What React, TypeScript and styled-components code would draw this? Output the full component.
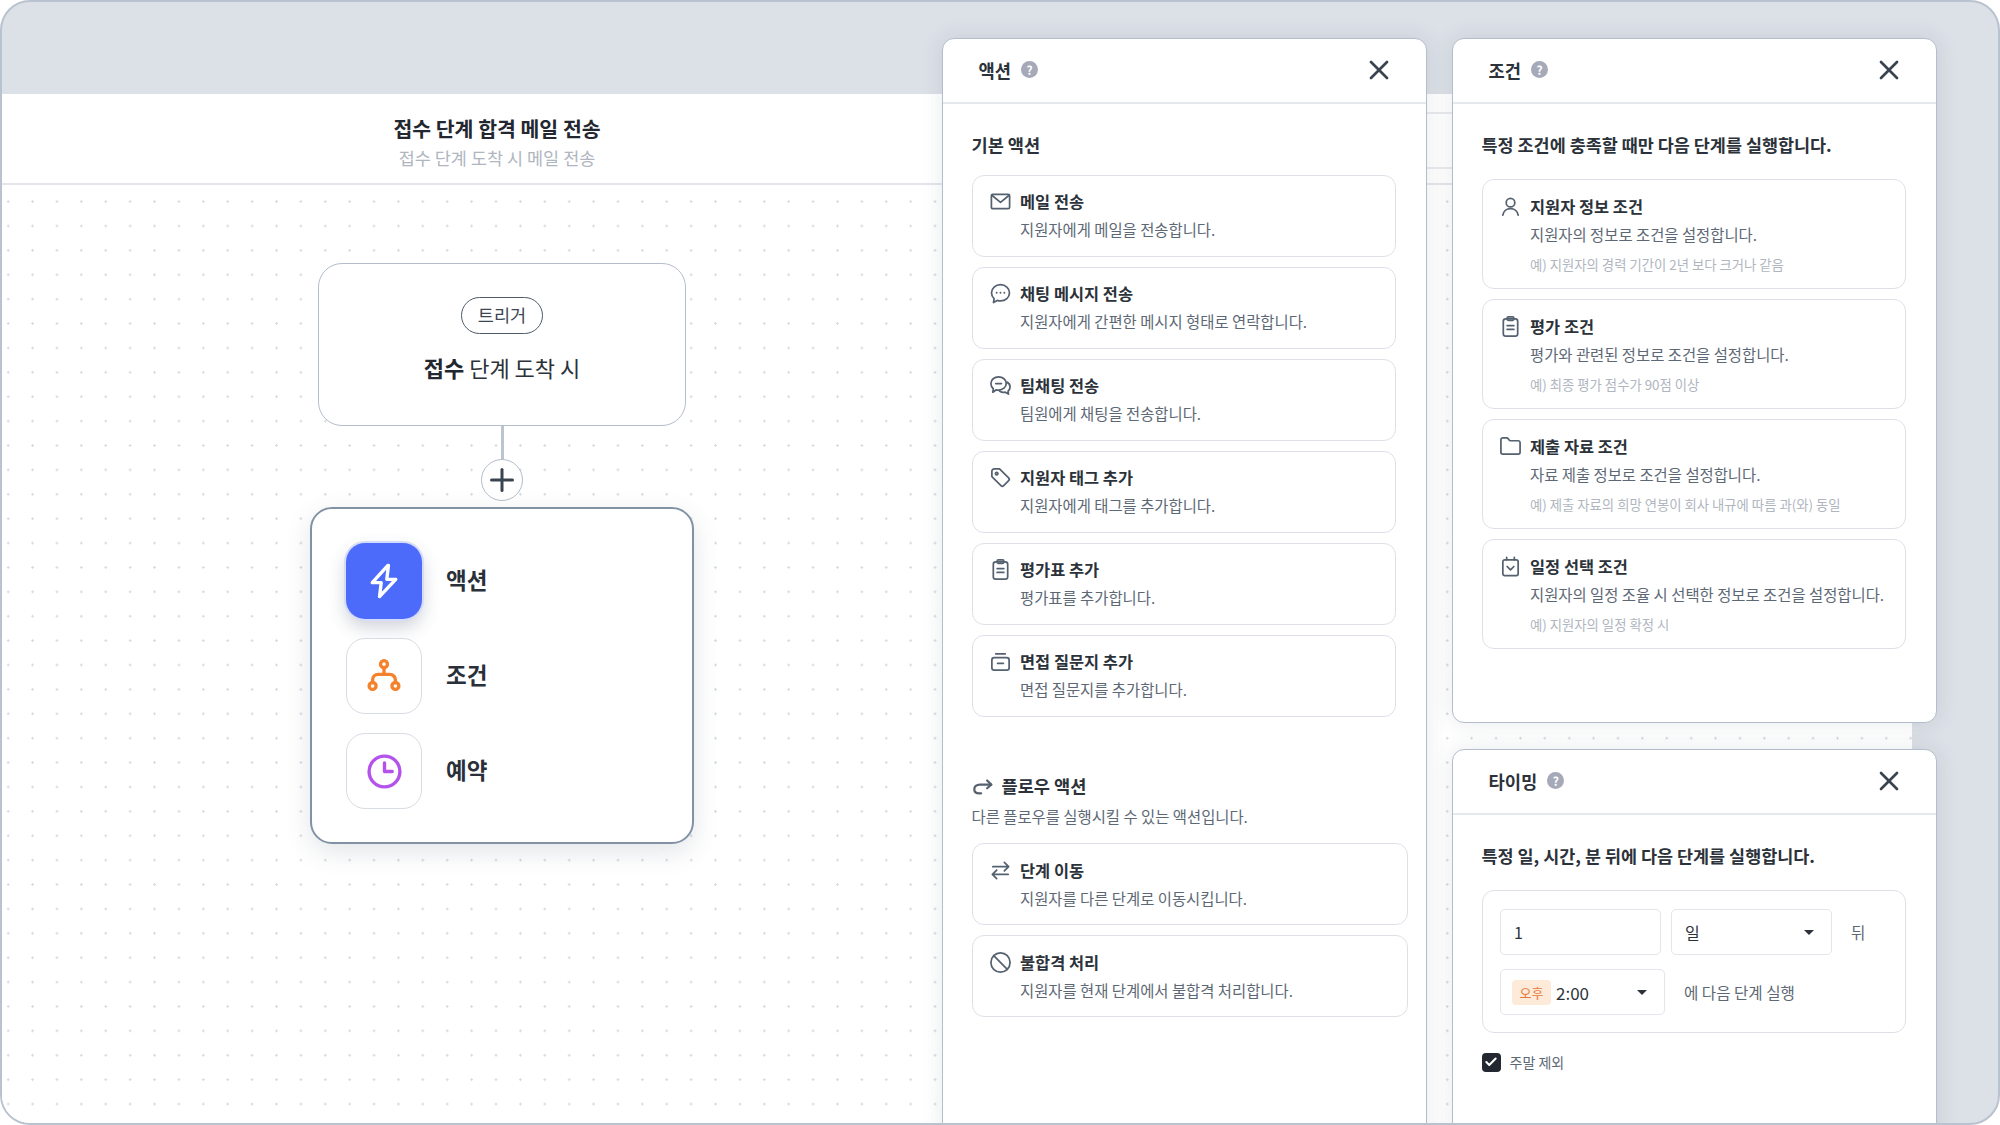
import * as React from 'react';
import styled, { createGlobalStyle } from 'styled-components';
import { Ban, Check, Folder, Plus, X } from 'lucide-react';

const GlobalStyle = createGlobalStyle`
  html, body {
    margin: 0;
    padding: 0;
    background: #fff;
  }
  body {
    font-family: "Noto Sans CJK KR", "Noto Sans", sans-serif;
    color: #23272f;
  }
  * {
    box-sizing: border-box;
  }
`;

const Frame = styled.div`
  display: grid;
  grid-template-columns: minmax(0, 1fr);
  grid-template-rows: minmax(0, 1fr);
  width: 2000px;
  height: 1125px;
  border: 2px solid #b9c2cf;
  border-radius: 30px;
  background: #dce0e7;
  overflow: hidden;
`;

const Workspace = styled.main`
  grid-area: 1 / 1;
  display: flex;
  flex-direction: column;
  margin: 92px 86px 0 0;
  background: #fff;
`;

const WorkspaceHeader = styled.header`
  display: flex;
  flex: none;
  height: 91px;
  border-bottom: 2px solid #e3e7ec;
`;

const TitleBlock = styled.div`
  flex: none;
  width: 990px;
  padding-top: 19px;
  text-align: center;
`;

const FlowTitle = styled.h1`
  margin: 0;
  font-size: 20.5px;
  line-height: 30px;
  font-weight: 700;
  color: #23272f;
`;

const FlowSubtitle = styled.p`
  margin: 0;
  font-size: 17.5px;
  line-height: 30px;
  font-weight: 400;
  color: #b0b6c0;
`;

const HiddenTabs = styled.div`
  flex: 1;
  height: 57px;
  margin-top: 18px;
  border-top: 2px solid #e8ebef;
  border-bottom: 2px solid #e8ebef;
`;

const Canvas = styled.section`
  flex: 1;
  padding: 78px 0 0 308px;
  background-color: #fff;
  background-image: radial-gradient(circle, #d6dbe2 1.1px, transparent 1.4px);
  background-size: 24.4px 24.4px;
  background-position: -6px 4.4px;
`;

const NodeColumn = styled.div`
  display: flex;
  flex-direction: column;
  align-items: center;
  width: 384px;
`;

const TriggerNode = styled.div`
  display: flex;
  flex: none;
  flex-direction: column;
  align-items: center;
  width: 368px;
  height: 163px;
  padding-top: 33px;
  border: 1px solid #b4bdcb;
  border-radius: 24px;
  background: #fff;
`;

const TriggerPill = styled.span`
  display: flex;
  align-items: center;
  justify-content: center;
  width: 82px;
  height: 37px;
  border: 1px solid #4f5b69;
  border-radius: 19px;
  font-size: 17.5px;
  padding-bottom: 2px;
  font-weight: 400;
  color: #3d4753;
`;

const TriggerLabel = styled.p`
  margin: 17px 0 0;
  font-size: 22px;
  line-height: 32px;
  font-weight: 400;
  color: #2c323a;
  strong {
    font-weight: 700;
    color: #23272f;
  }
`;

const Connector = styled.div`
  flex: none;
  width: 3px;
  height: 33px;
  background: #bcc4d0;
`;

const AddButton = styled.button`
  display: flex;
  flex: none;
  align-items: center;
  justify-content: center;
  width: 42px;
  height: 42px;
  padding: 0;
  border: 1px solid #b4bdcb;
  border-radius: 50%;
  background: #fff;
  color: #3a4450;
`;

const StepMenu = styled.div`
  display: flex;
  flex: none;
  flex-direction: column;
  gap: 19px;
  width: 384px;
  height: 337px;
  margin-top: 6px;
  padding: 34px 0 0 34px;
  border: 2px solid #8292a5;
  border-radius: 22px;
  background: #fff;
  box-shadow: 0 8px 26px rgba(60, 72, 92, 0.14);
`;

const StepRow = styled.div`
  display: flex;
  align-items: center;
  gap: 24px;
`;

const StepTile = styled.div<{ $active?: boolean }>`
  display: flex;
  flex: none;
  align-items: center;
  justify-content: center;
  width: 76px;
  height: 76px;
  border-radius: 19px;
  border: ${p => (p.$active ? '0' : '1px solid #d8dce4')};
  background: ${p => (p.$active ? '#4d6bfa' : '#fff')};
  box-shadow: ${p =>
    p.$active
      ? '0 0 0 2px #d5dcfb, 0 8px 18px rgba(50, 60, 90, 0.24)'
      : 'none'};
`;

const StepLabel = styled.span`
  padding-bottom: 5px;
  font-size: 22.5px;
  line-height: 30px;
  font-weight: 700;
  color: #2a3039;
`;

const PanelDock = styled.div`
  grid-area: 1 / 1;
  display: flex;
  justify-content: flex-end;
  gap: 25px;
  padding: 36px 61.5px 0 0;
  min-height: 0;
`;

const PanelColumn = styled.div`
  display: flex;
  flex: none;
  flex-direction: column;
  gap: 26px;
  width: 485px;
`;

const Panel = styled.aside<{ $height: number }>`
  flex: none;
  width: 485px;
  height: ${p => p.$height}px;
  border: 1px solid #b4bdcb;
  border-radius: 12px;
  background: #fff;
  box-shadow: 0 0 22px rgba(60, 72, 92, 0.12);
`;

const PanelHeader = styled.div`
  display: flex;
  align-items: center;
  height: 65px;
  padding: 0 31px 2px 36px;
  border-bottom: 2px solid #e5e8ed;
`;

const PanelTitle = styled.h2`
  margin: 0;
  font-size: 17.7px;
  line-height: 24px;
  font-weight: 700;
  color: #2c323a;
`;

const HelpBadge = styled.span`
  display: flex;
  align-items: center;
  justify-content: center;
  width: 17px;
  height: 17px;
  margin-left: 10px;
  border-radius: 50%;
  background: #a5a9b8;
  color: #fff;
  font-size: 12px;
  line-height: 17px;
  font-weight: 700;
`;

const CloseIcon = styled(X)`
  margin-left: auto;
  color: #3a4450;
`;

const PanelBody = styled.div`
  padding: 29px 29px 0;
`;

const SectionTitle = styled.h3`
  display: flex;
  align-items: center;
  gap: 8px;
  margin: 0;
  font-size: 17.6px;
  line-height: 24px;
  font-weight: 700;
  color: #2c323a;
`;

const FlowSection = styled.div`
  margin-top: 57px;
`;

const SectionDescription = styled.p`
  margin: 7px 0 16px;
  font-size: 15.4px;
  line-height: 22px;
  color: #5d6875;
`;

const Intro = styled.p`
  margin: 0 0 22px;
  font-size: 17.45px;
  line-height: 24px;
  font-weight: 700;
  color: #2c323a;
`;

const CardList = styled.div<{ $wide?: boolean }>`
  display: flex;
  flex-direction: column;
  gap: 10px;
  width: ${p => (p.$wide ? '436px' : '424px')};
  margin-top: ${p => (p.$wide ? '0' : '18px')};
`;

const ConditionList = styled(CardList)`
  margin-top: 0;
`;

const OptionCard = styled.div<{ $padding: string }>`
  display: flex;
  gap: 8px;
  padding: ${p => p.$padding};
  border: 1px solid #dde1e7;
  border-radius: 12px;
  background: #fff;
`;

const CardIcon = styled.div`
  display: flex;
  flex: none;
  align-items: center;
  justify-content: center;
  width: 24px;
  height: 24px;
  color: #55616f;
`;

const CardText = styled.div`
  min-width: 0;
`;

const CardTitle = styled.div`
  font-size: 16.4px;
  line-height: 24px;
  font-weight: 700;
  color: #2c323a;
`;

const CardDescription = styled.div`
  margin-top: 4px;
  font-size: 15.4px;
  line-height: 24px;
  color: #5d6875;
  white-space: nowrap;
`;

const CardExample = styled.div`
  margin-top: 9px;
  font-size: 13.35px;
  line-height: 20px;
  color: #b0b6c0;
  white-space: nowrap;
`;

const TimingBox = styled.div`
  display: flex;
  flex-direction: column;
  gap: 14px;
  width: 424px;
  height: 143px;
  padding: 18px 17.5px;
  border: 1px solid #dde1e7;
  border-radius: 12px;
`;

const TimingRow = styled.div`
  display: flex;
  align-items: center;
  gap: 10px;
`;

const Field = styled.div<{ $width: number }>`
  display: flex;
  flex: none;
  align-items: center;
  width: ${p => p.$width}px;
  height: 46px;
  padding: 0 17px 0 13px;
  border: 1px solid #e3e6eb;
  border-radius: 5px;
  font-size: 16px;
  color: #2c323a;
`;

const TimeField = styled(Field)`
  padding-left: 11px;
  font-size: 17px;
`;

const Caret = styled.span`
  flex: none;
  width: 0;
  height: 0;
  margin-left: auto;
  border-left: 5px solid transparent;
  border-right: 5px solid transparent;
  border-top: 5.5px solid #2c323a;
`;

const PeriodBadge = styled.span`
  display: flex;
  flex: none;
  align-items: center;
  justify-content: center;
  width: 39px;
  height: 25px;
  margin-right: 5px;
  border-radius: 4px;
  background: #fdead9;
  color: #e5793a;
  font-size: 13px;
`;

const TimingNote = styled.span`
  margin-left: 9px;
  font-size: 15.6px;
  line-height: 22px;
  color: #5d6875;
`;

const WeekendRow = styled.label`
  display: flex;
  align-items: center;
  gap: 9px;
  margin-top: 19px;
  font-size: 14px;
  line-height: 20px;
  color: #5d6875;
`;

const CheckMark = styled.span`
  display: flex;
  align-items: center;
  justify-content: center;
  width: 19px;
  height: 19px;
  border-radius: 4px;
  background: #23272f;
  color: #fff;
`;

type GlyphProps = { size?: number };

const Glyph: React.FC<React.PropsWithChildren<GlyphProps>> = ({ size = 23, children }) => (
  <svg
    width={size}
    height={size}
    viewBox="0 0 24 24"
    fill="none"
    stroke="currentColor"
    strokeWidth={1.8}
    strokeLinecap="round"
    strokeLinejoin="round"
  >
    {children}
  </svg>
);

const MailIcon = () => (
  <Glyph>
    <rect x="2.5" y="4.5" width="19" height="15" rx="1.5" />
    <path d="M3 5.5l9 7.5 9-7.5" />
  </Glyph>
);

const ChatIcon = () => (
  <Glyph>
    <path d="M12 2.800c5.200 0 9.400 3.700 9.400 8.500s-4.200 8.500-9.400 8.500c-1.200 0-2.300-.2-3.400-.6l-3.900 2.200.6-4.100c-1.700-1.500-2.700-3.600-2.700-6 0-4.800 4.200-8.500 9.400-8.500z" />
    <path d="M8 11.300h.01M12 11.300h.01M16 11.300h.01" strokeWidth={2} />
  </Glyph>
);

const TeamChatIcon = () => (
  <Glyph>
    <path d="M10 3c4.400 0 8 3 8 6.900s-3.600 6.900-8 6.900c-.8 0-1.600-.1-2.400-.3L4 19l.5-3.600C2.900 14.100 2 12.100 2 9.900 2 6 5.600 3 10 3z" />
    <path d="M7 10h6" />
    <path d="M18.700 8.500c2 1 3.300 2.900 3.300 5 0 1.700-.8 3.200-2.100 4.300l.4 3.200-3.300-2c-2.200.4-4.400-.1-6-1.300" />
  </Glyph>
);

const TagIcon = () => (
  <Glyph>
    <path d="M3 5.500A2.500 2.500 0 0 1 5.500 3H11l9.500 9.500a2 2 0 0 1 0 2.800l-5.200 5.200a2 2 0 0 1-2.800 0L3 11z" />
    <circle cx="8" cy="8" r="1.300" />
  </Glyph>
);

const SheetIcon = () => (
  <Glyph>
    <rect x="4.500" y="4" width="15" height="18" rx="2.500" />
    <rect x="8.500" y="2" width="7" height="3.500" rx="1.200" />
    <path d="M8.500 11h7M8.500 15h7" />
  </Glyph>
);

const QuestionIcon = () => (
  <Glyph>
    <path d="M7 4h10" />
    <rect x="3" y="8" width="18" height="13" rx="2.500" />
    <path d="M9 14h6" />
  </Glyph>
);

const MoveIcon = () => (
  <Glyph>
    <path d="M4 8h16M16 3.500 20.500 8 16 12.500" />
    <path d="M20 16H4M8 11.500 3.500 16 8 20.500" />
  </Glyph>
);

const UserIcon = () => (
  <Glyph>
    <circle cx="12" cy="8" r="4.500" />
    <path d="M4 21c.6-4.200 4-6.800 8-6.800s7.400 2.600 8 6.800" />
  </Glyph>
);

const ScheduleIcon = () => (
  <Glyph>
    <rect x="4" y="5" width="16" height="16.500" rx="2" />
    <path d="M8 2.500V5M16 2.500V5M8.500 12l3.500 3.500 3.500-3.500" />
  </Glyph>
);

const RedoArrow = () => (
  <svg width="22" height="22" viewBox="0 0 24 24" fill="none" stroke="#55616f" strokeWidth={2.4} strokeLinecap="round" strokeLinejoin="round">
    <path d="M16.500 6l4.500 4.500-4.500 4" />
    <path d="M21 10.500H8.500C5 10.500 2.500 12.600 2.500 15.500S5 20 8 20h2" />
  </svg>
);

const BoltIcon = () => (
  <svg width="38" height="38" viewBox="0 0 34 34" fill="none" stroke="#fff" strokeWidth={3} strokeLinejoin="round">
    <path d="M20.500 3 6.500 18.500h8L13 31l14.500-15.500h-8L21 3z" />
  </svg>
);

const BranchIcon = () => (
  <svg width="38" height="38" viewBox="0 0 24 24" fill="none" stroke="#f5812a" strokeWidth={2.1} strokeLinecap="round" strokeLinejoin="round">
    <circle cx="12" cy="4.500" r="2.200" />
    <circle cx="4.800" cy="18.300" r="2.200" />
    <circle cx="19.200" cy="18.300" r="2.200" />
    <path d="M12 6.700v4.300M4.800 16.100v-1.600A3.500 3.500 0 0 1 8.300 11h7.400a3.500 3.500 0 0 1 3.500 3.500v1.600" />
  </svg>
);

const ReserveIcon = () => (
  <svg width="37" height="37" viewBox="0 0 24 24" fill="none" stroke="#b452ec" strokeWidth={2.2} strokeLinecap="round" strokeLinejoin="round">
    <circle cx="12" cy="12" r="10" />
    <path d="M12 6.500V12h5" />
  </svg>
);

type Option = {
  icon: React.ReactNode;
  title: string;
  description: string;
  example?: string;
};

const BASIC_ACTIONS: Option[] = [
  { icon: <MailIcon />, title: '메일 전송', description: '지원자에게 메일을 전송합니다.' },
  { icon: <ChatIcon />, title: '채팅 메시지 전송', description: '지원자에게 간편한 메시지 형태로 연락합니다.' },
  { icon: <TeamChatIcon />, title: '팀채팅 전송', description: '팀원에게 채팅을 전송합니다.' },
  { icon: <TagIcon />, title: '지원자 태그 추가', description: '지원자에게 태그를 추가합니다.' },
  { icon: <SheetIcon />, title: '평가표 추가', description: '평가표를 추가합니다.' },
  { icon: <QuestionIcon />, title: '면접 질문지 추가', description: '면접 질문지를 추가합니다.' },
];

const FLOW_ACTIONS: Option[] = [
  { icon: <MoveIcon />, title: '단계 이동', description: '지원자를 다른 단계로 이동시킵니다.' },
  {
    icon: <Ban size={23} strokeWidth={1.8} />,
    title: '불합격 처리',
    description: '지원자를 현재 단계에서 불합격 처리합니다.',
  },
];

const CONDITIONS: Option[] = [
  {
    icon: <UserIcon />,
    title: '지원자 정보 조건',
    description: '지원자의 정보로 조건을 설정합니다.',
    example: '예) 지원자의 경력 기간이 2년 보다 크거나 같음',
  },
  {
    icon: <SheetIcon />,
    title: '평가 조건',
    description: '평가와 관련된 정보로 조건을 설정합니다.',
    example: '예) 최종 평가 점수가 90점 이상',
  },
  {
    icon: <Folder size={23} strokeWidth={1.8} />,
    title: '제출 자료 조건',
    description: '자료 제출 정보로 조건을 설정합니다.',
    example: '예) 제출 자료의 희망 연봉이 회사 내규에 따름 과(와) 동일',
  },
  {
    icon: <ScheduleIcon />,
    title: '일정 선택 조건',
    description: '지원자의 일정 조율 시 선택한 정보로 조건을 설정합니다.',
    example: '예) 지원자의 일정 확정 시',
  },
];

const OptionItem = ({ option, padding }: { option: Option; padding: string }) => (
  <OptionCard $padding={padding}>
    <CardIcon>{option.icon}</CardIcon>
    <CardText>
      <CardTitle>{option.title}</CardTitle>
      <CardDescription>{option.description}</CardDescription>
      {option.example && <CardExample>{option.example}</CardExample>}
    </CardText>
  </OptionCard>
);

const PanelTop = ({ title }: { title: string }) => (
  <PanelHeader>
    <PanelTitle>{title}</PanelTitle>
    <HelpBadge>?</HelpBadge>
    <CloseIcon size={32} strokeWidth={2} />
  </PanelHeader>
);

export default function App() {
  return (
    <>
      <GlobalStyle />
      <Frame>
        <Workspace>
          <WorkspaceHeader>
            <TitleBlock>
              <FlowTitle>접수 단계 합격 메일 전송</FlowTitle>
              <FlowSubtitle>접수 단계 도착 시 메일 전송</FlowSubtitle>
            </TitleBlock>
            <HiddenTabs />
          </WorkspaceHeader>
          <Canvas>
            <NodeColumn>
              <TriggerNode>
                <TriggerPill>트리거</TriggerPill>
                <TriggerLabel>
                  <strong>접수</strong> 단계 도착 시
                </TriggerLabel>
              </TriggerNode>
              <Connector />
              <AddButton>
                <Plus size={36} strokeWidth={2} />
              </AddButton>
              <StepMenu>
                <StepRow>
                  <StepTile $active>
                    <BoltIcon />
                  </StepTile>
                  <StepLabel>액션</StepLabel>
                </StepRow>
                <StepRow>
                  <StepTile>
                    <BranchIcon />
                  </StepTile>
                  <StepLabel>조건</StepLabel>
                </StepRow>
                <StepRow>
                  <StepTile>
                    <ReserveIcon />
                  </StepTile>
                  <StepLabel>예약</StepLabel>
                </StepRow>
              </StepMenu>
            </NodeColumn>
          </Canvas>
        </Workspace>

        <PanelDock>
          <Panel $height={1110}>
            <PanelTop title="액션" />
            <PanelBody>
              <SectionTitle>기본 액션</SectionTitle>
              <CardList>
                {BASIC_ACTIONS.map(option => (
                  <OptionItem key={option.title} option={option} padding="13px 15.5px 15px" />
                ))}
              </CardList>
              <FlowSection>
                <SectionTitle>
                  <RedoArrow />
                  플로우 액션
                </SectionTitle>
                <SectionDescription>다른 플로우를 실행시킬 수 있는 액션입니다.</SectionDescription>
                <CardList $wide>
                  {FLOW_ACTIONS.map(option => (
                    <OptionItem key={option.title} option={option} padding="14px 15.5px" />
                  ))}
                </CardList>
              </FlowSection>
            </PanelBody>
          </Panel>

          <PanelColumn>
            <Panel $height={685}>
              <PanelTop title="조건" />
              <PanelBody>
                <Intro>특정 조건에 충족할 때만 다음 단계를 실행합니다.</Intro>
                <ConditionList>
                  {CONDITIONS.map(option => (
                    <OptionItem key={option.title} option={option} padding="14px 15.5px 13px" />
                  ))}
                </ConditionList>
              </PanelBody>
            </Panel>
            <Panel $height={420}>
              <PanelTop title="타이밍" />
              <PanelBody>
                <Intro>특정 일, 시간, 분 뒤에 다음 단계를 실행합니다.</Intro>
                <TimingBox>
                  <TimingRow>
                    <Field $width={161}>1</Field>
                    <Field $width={161}>
                      일
                      <Caret />
                    </Field>
                    <TimingNote>뒤</TimingNote>
                  </TimingRow>
                  <TimingRow>
                    <TimeField $width={165}>
                      <PeriodBadge>오후</PeriodBadge>
                      2:00
                      <Caret />
                    </TimeField>
                    <TimingNote>에 다음 단계 실행</TimingNote>
                  </TimingRow>
                </TimingBox>
                <WeekendRow>
                  <CheckMark>
                    <Check size={14} strokeWidth={3.5} />
                  </CheckMark>
                  주말 제외
                </WeekendRow>
              </PanelBody>
            </Panel>
          </PanelColumn>
        </PanelDock>
      </Frame>
    </>
  );
}
